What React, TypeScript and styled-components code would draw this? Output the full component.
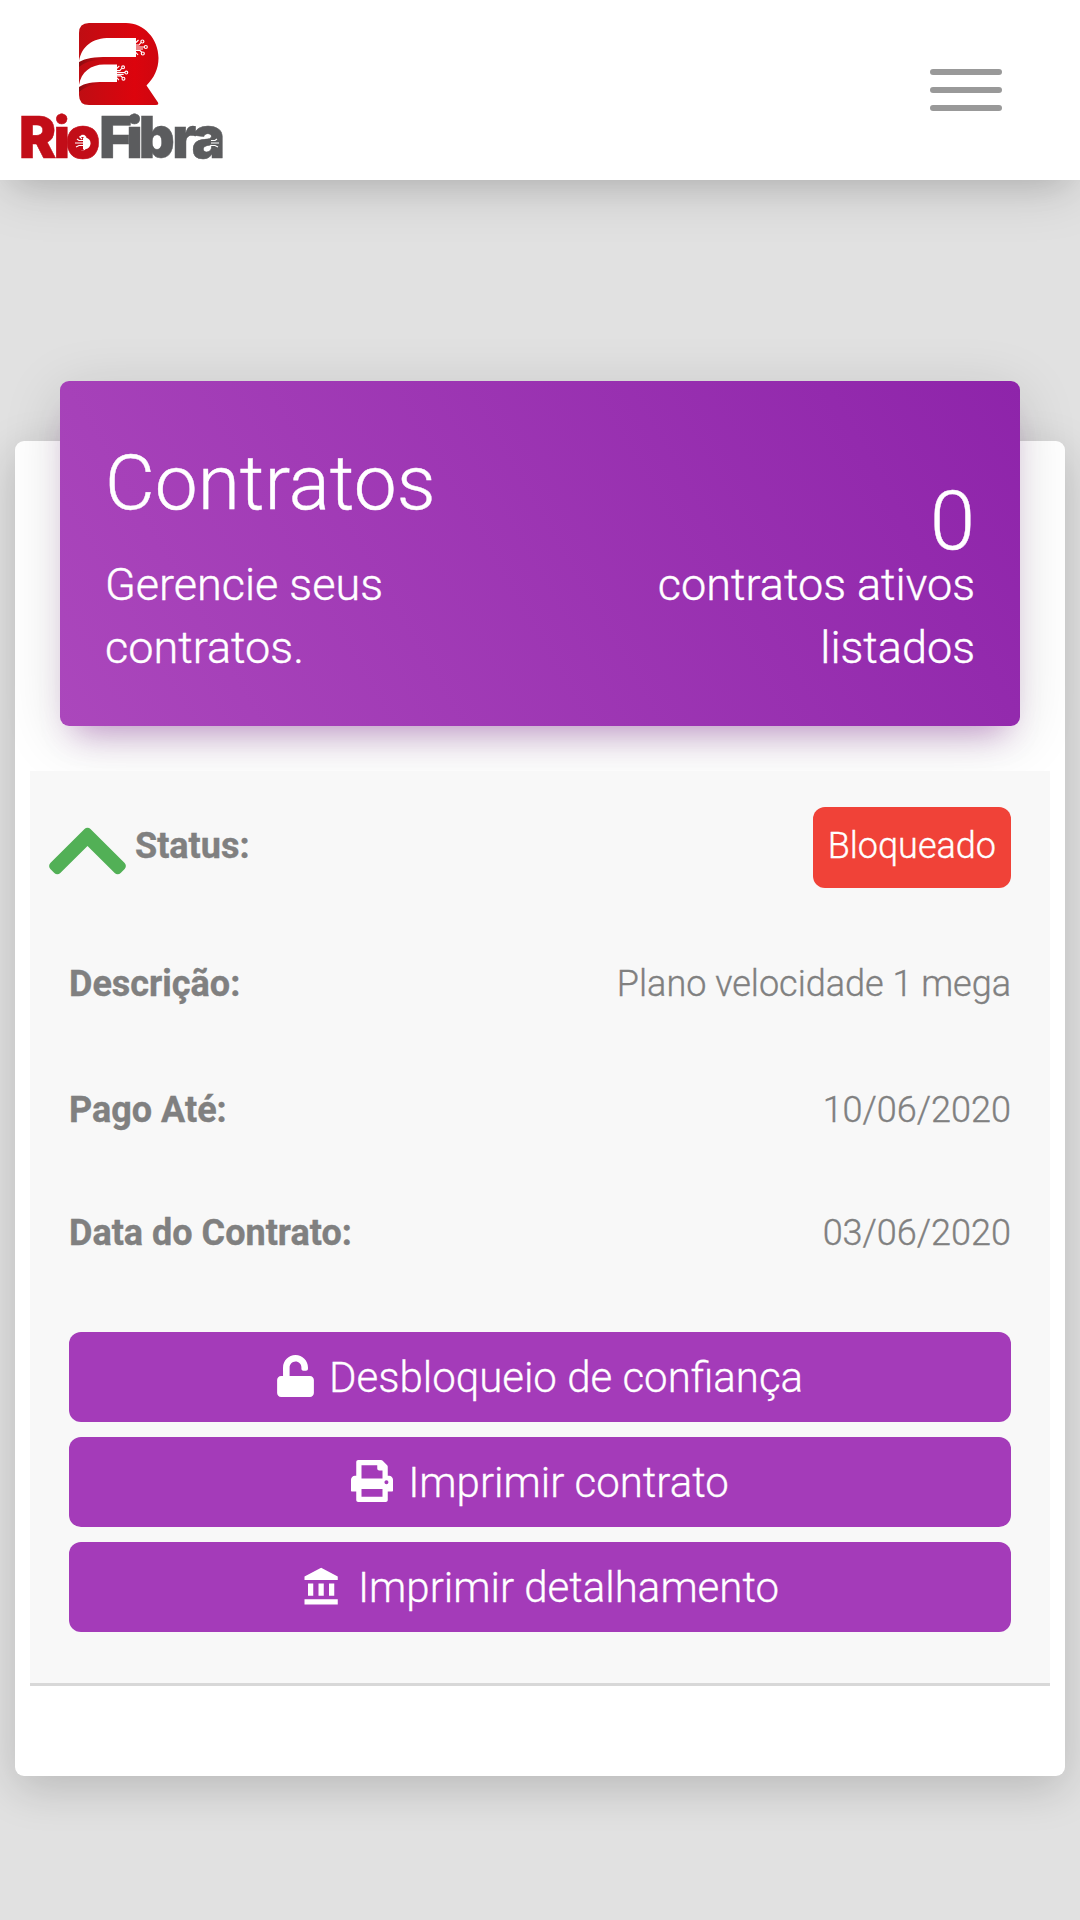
import React from "react";
import styled, { createGlobalStyle } from "styled-components";

const GlobalStyle = createGlobalStyle`
  *, *::before, *::after { box-sizing: border-box; }
  body {
    margin: 0;
    background: #e1e1e1;
    font-family: Roboto, "Noto Sans", sans-serif;
    font-weight: 300;
    color: #808080;
  }
`;

const Page = styled.div`
  width: 1080px;
  min-height: 1920px;
  overflow: hidden;
  background: #e1e1e1;
`;

const Navbar = styled.header`
  display: flex;
  justify-content: space-between;
  align-items: center;
  height: 180px;
  padding: 0 78px 0 15px;
  background: #fff;
  box-shadow: 0 12px 54px -3px rgba(0, 0, 0, 0.14),
    0 18px 30px -15px rgba(0, 0, 0, 0.12);
`;

const LogoSvg = styled.svg`
  display: block;
  width: 220px;
  height: 180px;
  overflow: visible;
`;

const MenuButton = styled.button`
  display: flex;
  flex-direction: column;
  gap: 12px;
  padding: 0;
  border: 0;
  background: none;
`;

const MenuBar = styled.span`
  width: 72px;
  height: 6px;
  border-radius: 3px;
  background: #999;
`;

const Content = styled.main`
  padding: 261px 15px 0;
`;

const Card = styled.section`
  display: flex;
  flex-direction: column;
  height: 1335px;
  padding: 0 15px;
  border-radius: 9px;
  background: #fff;
  box-shadow: 0 12px 45px rgba(0, 0, 0, 0.18);
`;

const CardHeader = styled.div`
  display: flex;
  flex: none;
  justify-content: space-between;
  height: 345px;
  margin: -60px 30px 45px;
  padding: 49px 45px 47px;
  border-radius: 9px;
  color: #fff;
  background: linear-gradient(60deg, #ab47bc, #8e24aa);
  box-shadow: 0 12px 60px 0 rgba(0, 0, 0, 0.14),
    0 21px 30px -15px rgba(156, 39, 176, 0.4);
  -webkit-text-stroke: 0.4px currentColor;
`;

const HeaderColumn = styled.div<{ $end?: boolean }>`
  display: flex;
  flex-direction: column;
  justify-content: ${(p) => (p.$end ? "flex-end" : "flex-start")};
  width: ${(p) => (p.$end ? "360px" : "320px")};
  text-align: ${(p) => (p.$end ? "right" : "left")};
`;

const Title = styled.h1`
  margin: -1px 0 16px;
  font-size: 76.6px;
  font-weight: 300;
  line-height: 108px;
`;

const Count = styled.div`
  margin-bottom: -1px;
  font-size: 81px;
  line-height: 64px;
`;

const Subtitle = styled.p`
  margin: 0;
  font-size: 45px;
  line-height: 63px;
`;

const Contract = styled.article`
  position: relative;
  height: 915px;
  background: #f8f8f8;
  border-bottom: 3px solid #d8d8d8;
`;

const Row = styled.div<{ $height: number; $lead?: boolean }>`
  display: flex;
  justify-content: space-between;
  align-items: center;
  height: ${(p) => p.$height}px;
  padding: 0 39px 0 ${(p) => (p.$lead ? 18 : 39)}px;
  font-size: 36px;
  line-height: 54px;
  -webkit-text-stroke: 0.35px currentColor;
`;

const Label = styled.span`
  font-weight: 700;
`;

const StatusLabel = styled.div`
  display: flex;
  align-items: center;
  gap: 8px;
`;

const Chevron = styled.svg`
  width: 79px;
  height: 90px;
  margin-top: 9px;
  fill: #52b056;
`;

const Badge = styled.span`
  height: 81px;
  margin-top: 3px;
  padding: 12px 15px 15px;
  border-radius: 12px;
  background: #f04238;
  color: #fff;
`;

const Actions = styled.div`
  display: flex;
  flex-direction: column;
  gap: 15px;
  padding: 39px 39px 0;
`;

const ActionButton = styled.button`
  display: flex;
  justify-content: center;
  align-items: center;
  gap: 15px;
  height: 90px;
  padding: 0;
  border: 0;
  border-radius: 12px;
  background: #a43bb9;
  color: #fff;
  font: 300 42px/88px Roboto, "Noto Sans", sans-serif;
  -webkit-text-stroke: 0.3px currentColor;
`;

const ActionText = styled.span`
  padding-top: 2px;
`;

const ActionIcon = styled.svg<{ $w: number; $lift: number }>`
  width: ${(p) => p.$w}px;
  height: 42px;
  margin-bottom: ${(p) => p.$lift}px;
  fill: currentColor;
`;

const Fibers = ({ x, y, s = 1 }: { x: number; y: number; s?: number }) => (
  <g
    transform={`translate(${x} ${y}) scale(${s})`}
    fill="none"
    stroke="#fff"
    strokeWidth="1.2"
  >
    <path d="M0 -2.500H3L5 -5M0 -0.500H6L8.500 -0.500M0 1.500H7M0 3H4L6 5M0 -5L2.500 -7.500M0 5L2 7.500" />
    <circle cx="6.400" cy="-6" r="1.500" />
    <circle cx="9.800" cy="-0.500" r="1.500" />
    <circle cx="6.800" cy="6" r="1.500" />
  </g>
);

const Logo = () => (
  <LogoSvg viewBox="15 0 220 180" role="img" aria-label="RioFibra">
    <defs>
      <linearGradient id="mark" x1="0" x2="1">
        <stop offset="0" stopColor="#bf0d13" />
        <stop offset="0.7" stopColor="#dc040d" />
        <stop offset="1" stopColor="#ce0710" />
      </linearGradient>
      <linearGradient id="fold" x1="0" x2="1">
        <stop offset="0" stopColor="#8c0b0f" />
        <stop offset="1" stopColor="#c80b12" stopOpacity="0" />
      </linearGradient>
    </defs>
    <path
      fill="url(#mark)"
      d="M89 23H126C144 23 158.500 39 158.500 58C158.500 69 154 78 146.500 85.500L158 102.500Q159 105 156 105H89Q79 105 79 95V33Q79 23 89 23Z"
    />
    <path fill="url(#fold)" d="M79 62C86 57 96 57 116 57V59C96 59 86 61 79 67Z" />
    <path fill="url(#fold)" d="M79 86C86 82 94 82 108 82V83C94 83.500 86 86 79 92Z" />
    <path fill="#fff" d="M79 61C82 46 92 38 110 38H136V57H108C94 57 86 58 79 62Z" />
    <path fill="#fff" d="M79 85C81 72 91 64.500 104 64.500H117V82H104C92 82 85 83 79 87Z" />
    <Fibers x={136} y={47.5} />
    <Fibers x={117} y={73} s={0.95} />
    <g
      transform="scale(0.97 1)"
      fontFamily="Inter, Roboto, sans-serif"
      fontSize="57.500"
      fontWeight="900"
      strokeWidth="0.500"
    >
      <text x="19.600 55.200 67.500" y="158" fill="#c20d18" stroke="#c20d18">
        Rio
      </text>
      <text x="102.200 130.200 143 177.500 197.800" y="158" fill="#5b5c5e" stroke="#5b5c5e">
        Fibra
      </text>
    </g>
    <path fill="#c20d18" d="M76 137H84V150H76Z" />
    <path fill="#fff" d="M83 137.500C88 137.500 90.500 139.500 90.500 143.300C90.500 147 88 149.500 83 149.500Z" />
    <path fill="none" stroke="#fff" strokeWidth="1.200" d="M83 140.500H79L77 139M83 143H75M83 145.500H79L76 147M82 139L79.500 136.500" />
    <path fill="none" stroke="#fff" strokeWidth="1.200" d="M211 140.500H215L217 139M211 143H219M211 145.500H215L218 147" />
  </LogoSvg>
);

const UNLOCK =
  "M400 256H152V152.900c0-39.600 31.700-72.500 71.300-72.900 40-.4 72.700 32.100 72.700 72v16c0 13.300 10.700 24 24 24h32c13.300 0 24-10.700 24-24v-16C376 68 307.500-.3 223.500 0 139.500.3 72 69.500 72 153.500V256H48c-26.500 0-48 21.500-48 48v160c0 26.500 21.500 48 48 48h352c26.500 0 48-21.500 48-48V304c0-26.500-21.500-48-48-48z";
const PRINT =
  "M464 192h-16V81.941a24 24 0 0 0-7.029-16.970L383.029 7.029A24 24 0 0 0 366.059 0H88C74.745 0 64 10.745 64 24v168H48c-26.510 0-48 21.490-48 48v132c0 6.627 5.373 12 12 12h52v104c0 13.255 10.745 24 24 24h336c13.255 0 24-10.745 24-24V384h52c6.627 0 12-5.373 12-12V240c0-26.510-21.490-48-48-48zm-80 256H128v-96h256v96zM128 224V64h192v40c0 13.200 10.800 24 24 24h40v96H128zm304 72c-13.254 0-24-10.746-24-24s10.746-24 24-24 24 10.746 24 24-10.746 24-24 24z";
const BANK =
  "M4 10v7h3v-7H4zm6 0v7h3v-7h-3zM2 22h19v-3H2v3zm14-12v7h3v-7h-3zm-4.500-9L2 6v2h19V6l-9.500-5z";
const CHEVRON_UP =
  "M240.971 130.524l194.343 194.343c9.373 9.373 9.373 24.569 0 33.941l-22.667 22.667c-9.357 9.357-24.522 9.375-33.901.04L224 227.495 69.255 381.516c-9.379 9.335-24.544 9.317-33.901-.04l-22.667-22.667c-9.373-9.373-9.373-24.569 0-33.941L207.030 130.525c9.372-9.373 24.568-9.373 33.941-.001z";

const details = [
  { label: "Descrição:", value: "Plano velocidade 1 mega", height: 126 },
  { label: "Pago Até:", value: "10/06/2020", height: 126 },
  { label: "Data do Contrato:", value: "03/06/2020", height: 120 },
];

const actions = [
  { label: "Desbloqueio de confiança", path: UNLOCK, box: "0 0 448 512", width: 37, lift: 2 },
  { label: "Imprimir contrato", path: PRINT, box: "0 0 512 512", width: 42, lift: 2 },
  { label: "Imprimir detalhamento", path: BANK, box: "0 0 24 24", width: 42, lift: 0 },
];

export default function App() {
  return (
    <Page>
      <GlobalStyle />
      <Navbar>
        <Logo />
        <MenuButton aria-label="Menu">
          <MenuBar />
          <MenuBar />
          <MenuBar />
        </MenuButton>
      </Navbar>
      <Content>
        <Card>
          <CardHeader>
            <HeaderColumn>
              <Title>Contratos</Title>
              <Subtitle>Gerencie seus contratos.</Subtitle>
            </HeaderColumn>
            <HeaderColumn $end>
              <Count>0</Count>
              <Subtitle>contratos ativos listados</Subtitle>
            </HeaderColumn>
          </CardHeader>
          <Contract>
            <Row $height={150} $lead>
              <StatusLabel>
                <Chevron viewBox="0 0 448 512">
                  <path d={CHEVRON_UP} />
                </Chevron>
                <Label>Status:</Label>
              </StatusLabel>
              <Badge>Bloqueado</Badge>
            </Row>
            {details.map((d) => (
              <Row key={d.label} $height={d.height}>
                <Label>{d.label}</Label>
                <span>{d.value}</span>
              </Row>
            ))}
            <Actions>
              {actions.map((a) => (
                <ActionButton key={a.label}>
                  <ActionIcon viewBox={a.box} $w={a.width} $lift={a.lift}>
                    <path d={a.path} />
                  </ActionIcon>
                  <ActionText>{a.label}</ActionText>
                </ActionButton>
              ))}
            </Actions>
          </Contract>
        </Card>
      </Content>
    </Page>
  );
}
